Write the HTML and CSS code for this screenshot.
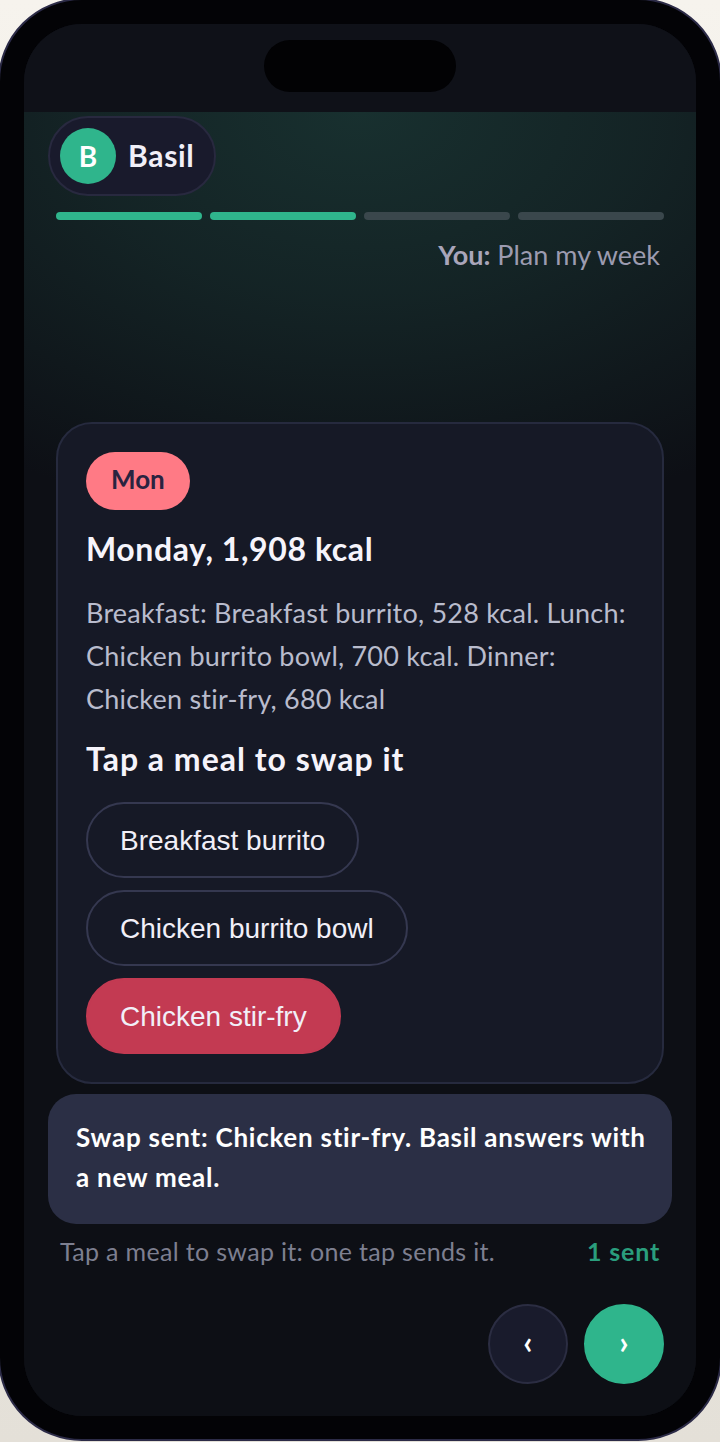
FILE: index.html
```html
<!DOCTYPE html>
<html lang="en">
<head>
<meta charset="utf-8">
<title>Basil meal planner</title>
<link rel="stylesheet" href="styles.css">
</head>
<body>
<div class="phone">
  <div class="screen">
    <div class="notch"></div>
    <div class="status-bar"></div>
    <main class="content">
      <div class="top">
        <div class="agent">
          <span class="avatar">B</span>
          <span class="agent-name">Basil</span>
        </div>
        <div class="progress">
          <span class="seg seg-done"></span>
          <span class="seg seg-done"></span>
          <span class="seg"></span>
          <span class="seg"></span>
        </div>
        <p class="you"><b>You:</b> Plan my week</p>
      </div>
      <section class="card">
        <span class="chip">Mon</span>
        <h2 class="title">Monday, 1,908 kcal</h2>
        <p class="summary">Breakfast: Breakfast burrito, 528 kcal. Lunch: Chicken burrito bowl, 700 kcal. Dinner: Chicken stir-fry, 680 kcal</p>
        <h3 class="title swap-title">Tap a meal to swap it</h3>
        <div class="meals">
          <button class="meal">Breakfast burrito</button>
          <button class="meal">Chicken burrito bowl</button>
          <button class="meal meal-active">Chicken stir-fry</button>
        </div>
      </section>
      <div class="toast">Swap sent: Chicken stir-fry. Basil answers with a new meal.</div>
      <div class="hint-row">
        <span class="hint">Tap a meal to swap it: one tap sends it.</span>
        <span class="count">1 sent</span>
      </div>
      <nav class="nav">
        <button class="nav-btn">‹</button>
        <button class="nav-btn nav-next">›</button>
      </nav>
    </main>
  </div>
</div>
</body>
</html>
```
FILE: styles.css
```css
* { box-sizing: border-box; }

html, body { margin: 0; height: 100%; overflow: hidden; }

body {
  background: linear-gradient(180deg, #f6f3ed 0%, #e4e0d8 100%);
  font-family: "Lato", "Noto Sans", sans-serif;
}

.phone {
  width: 724px;
  height: 1443px;
  margin: -2px -2px 0;
  padding: 24px 24px 23px;
  background: #030306;
  border: 2px solid #2c2b47;
  border-radius: 84px;
}

.screen {
  position: relative;
  height: 100%;
  border-radius: 58px;
  overflow: hidden;
  background: #0d0f15;
  display: flex;
  flex-direction: column;
}

.notch {
  position: absolute;
  top: 16px;
  left: 240px;
  width: 192px;
  height: 52px;
  border-radius: 26px;
  background: #020204;
}

.status-bar {
  flex: none;
  height: 88px;
  background: #0f1118;
}

.content {
  flex: 1;
  padding: 4px 24px 32px;
  background:
    radial-gradient(ellipse 640px 420px at 50% 0, #18302f 0%, rgba(24, 48, 47, 0.62) 45%, rgba(24, 48, 47, 0) 100%),
    #0d0f15;
  display: flex;
  flex-direction: column;
}

.top { height: 306px; }

.agent {
  display: inline-flex;
  align-items: center;
  gap: 12px;
  height: 80px;
  padding: 0 19px 0 10px;
  border: 2px solid #28293f;
  border-radius: 40px;
  background: #191a2c;
}

.avatar {
  width: 56px;
  height: 56px;
  border-radius: 50%;
  background: #2fb58c;
  color: #fff;
  font-size: 28px;
  font-weight: 700;
  display: flex;
  align-items: center;
  justify-content: center;
}

.agent-name {
  color: #f1eff8;
  font-size: 30px;
  line-height: 34px;
  margin-top: -2px;
  font-weight: 700;
  letter-spacing: 0.7px;
}

.progress {
  display: flex;
  gap: 8px;
  margin: 16px 8px 0;
}

.seg {
  flex: 1;
  height: 8px;
  border-radius: 4px;
  background: #3a474c;
}

.seg-done { background: #2fb58c; }

.you {
  margin: 17px 12px 0 0;
  text-align: right;
  color: #9c9bb0;
  font-size: 27px;
  line-height: 36px;
}

.you b { color: #a9a5ba; }

.card {
  margin: 0 8px;
  padding: 28px;
  border: 2px solid #262a3e;
  border-radius: 36px;
  background: #161926;
  display: flex;
  flex-direction: column;
  align-items: flex-start;
}

.chip {
  height: 58px;
  padding: 0 25px;
  border-radius: 29px;
  background: #ff7a85;
  color: #2a2340;
  font-size: 26px;
  font-weight: 700;
  line-height: 54px;
}

.title {
  margin: 17px 0 0;
  color: #f6f4fb;
  font-size: 32px;
  font-weight: 700;
  line-height: 44px;
  letter-spacing: 0.6px;
}

.summary {
  margin: 20px 0 0;
  color: #b9bccd;
  font-size: 27px;
  line-height: 43px;
  letter-spacing: 0.22px;
}

.swap-title {
  margin-top: 17px;
  letter-spacing: 1px;
}

.meals {
  margin-top: 21px;
  display: flex;
  flex-direction: column;
  align-items: flex-start;
  gap: 12px;
}

.meal {
  height: 76px;
  padding: 2px 32px 0;
  border: 2px solid #353850;
  border-radius: 38px;
  background: transparent;
  color: #f1eff8;
  font-family: "Liberation Sans", Arial, sans-serif;
  font-size: 28px;
}

.meal-active {
  border-color: #c33a52;
  background: #c33a52;
}

.toast {
  margin-top: 10px;
  padding: 23px 24px 27px 28px;
  border-radius: 28px;
  background: #2b2f45;
  color: #fff;
  font-size: 26px;
  font-weight: 700;
  line-height: 40px;
  letter-spacing: 0.74px;
}

.hint-row {
  display: flex;
  justify-content: space-between;
  align-items: center;
  margin: 9px 12px 0;
  height: 36px;
  font-size: 25px;
}

.hint {
  color: #7d7f90;
  letter-spacing: 0.33px;
}

.count {
  color: #2a9e7d;
  font-weight: 700;
  letter-spacing: 0.8px;
}

.nav {
  display: flex;
  justify-content: flex-end;
  gap: 16px;
  margin: 35px 8px 0 0;
}

.nav-btn {
  width: 80px;
  height: 80px;
  border: 2px solid #2b2d42;
  border-radius: 50%;
  background: #191b2c;
  color: #fff;
  font-family: "Lato", sans-serif;
  font-size: 32px;
  font-weight: 700;
  line-height: 70px;
  padding: 0 0 4px;
}

.nav-next {
  border-color: #2fb58c;
  background: #2fb58c;
}
```
